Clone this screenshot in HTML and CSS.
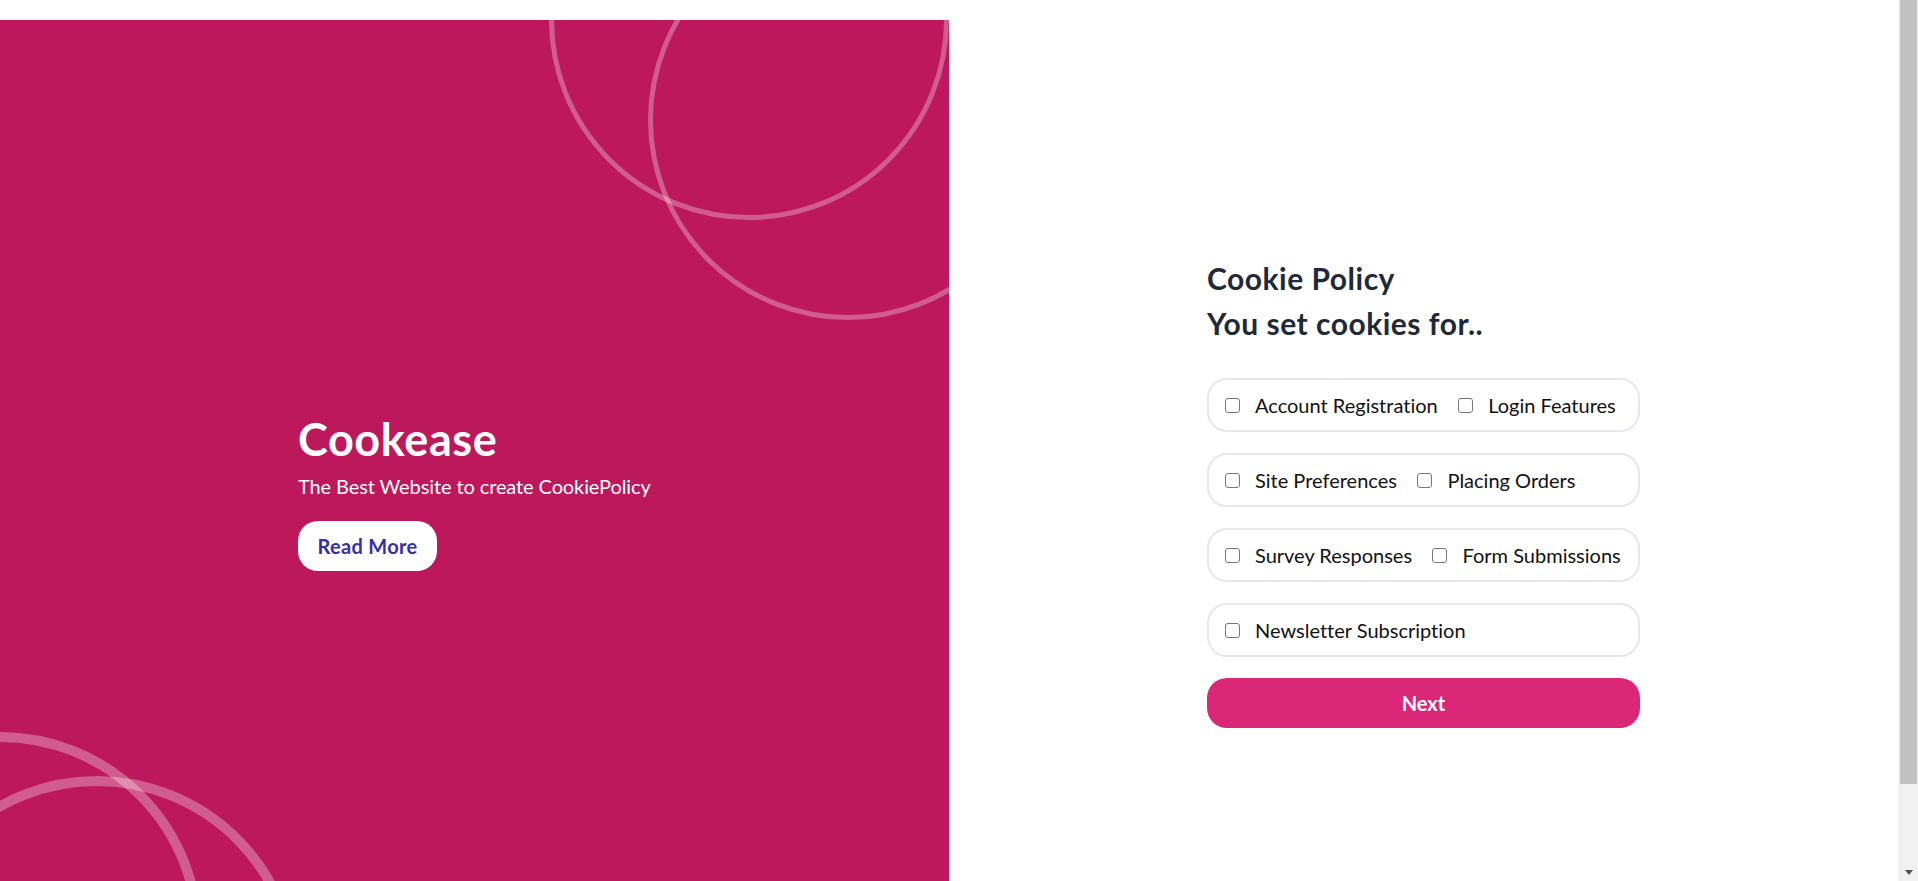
FILE: index.html
```html
<!DOCTYPE html>
<html lang="en">
<head>
<meta charset="utf-8">
<title>Cookease</title>
<link rel="stylesheet" href="styles.css">
</head>
<body>
<main class="page">
  <section class="hero">
    <span class="ring ring-a"></span>
    <span class="ring ring-b"></span>
    <span class="ring ring-c"></span>
    <span class="ring ring-d"></span>
    <div class="hero-content">
      <h1 class="brand">Cookease</h1>
      <p class="tagline">The Best Website to create CookiePolicy</p>
      <a class="read-more" href="#">Read More</a>
    </div>
  </section>
  <section class="panel">
    <form class="policy-form">
      <h2 class="title">Cookie Policy</h2>
      <h2 class="title">You set cookies for..</h2>
      <div class="options">
        <div class="option-row">
          <label class="option"><input type="checkbox"><span>Account Registration</span></label>
          <label class="option"><input type="checkbox"><span>Login Features</span></label>
        </div>
        <div class="option-row">
          <label class="option"><input type="checkbox"><span>Site Preferences</span></label>
          <label class="option"><input type="checkbox"><span>Placing Orders</span></label>
        </div>
        <div class="option-row">
          <label class="option"><input type="checkbox"><span>Survey Responses</span></label>
          <label class="option"><input type="checkbox"><span>Form Submissions</span></label>
        </div>
        <div class="option-row">
          <label class="option"><input type="checkbox"><span>Newsletter Subscription</span></label>
        </div>
      </div>
      <button type="button" class="next">Next</button>
    </form>
  </section>
</main>
<div class="scrollbar" aria-hidden="true">
  <div class="scroll-thumb"></div>
  <div class="scroll-arrow"></div>
</div>
</body>
</html>
```
FILE: styles.css
```css
html, body {
  margin: 0;
  padding: 0;
  background: #ffffff;
}

body {
  font-family: Lato, "Open Sans", "Liberation Sans", sans-serif;
  font-variant-ligatures: none;
}

.page {
  display: flex;
  margin-top: 20px;
}

/* left hero */
.hero {
  position: relative;
  flex: none;
  width: 949px;
  height: 944px;
  background: #be185d;
  overflow: hidden;
  display: flex;
  align-items: center;
  justify-content: center;
}

.ring {
  position: absolute;
  box-sizing: border-box;
  border-radius: 50%;
  border: 5px solid rgba(255, 255, 255, 0.3);
}

.ring-a { width: 400px; height: 400px; left: 549px; top: -200px; }
.ring-b { width: 400px; height: 400px; left: 648px; top: -100px; }
.ring-c { width: 406px; height: 406px; left: -203px; top: 712px; border-width: 10px; }
.ring-d { width: 406px; height: 406px; left: -106px; top: 756px; border-width: 10px; }

.hero-content {
  position: relative;
  width: 350px;
  margin-left: -3px;
  color: #ffffff;
}

.brand {
  margin: 0;
  font-size: 45px;
  line-height: 50px;
  font-weight: 700;
  letter-spacing: 0.6px;
}

.tagline {
  margin: 7px 0 0;
  font-size: 20px;
  line-height: 30px;
  letter-spacing: -0.1px;
  white-space: nowrap;
}

.read-more {
  display: flex;
  align-items: center;
  justify-content: center;
  width: 139px;
  height: 50px;
  margin-top: 20px;
  border-radius: 20px;
  background: #ffffff;
  color: #3730a3;
  font-size: 20px;
  font-weight: 700;
  letter-spacing: 0.3px;
  text-decoration: none;
}

/* right form panel */
.panel {
  flex: none;
  width: 951px;
  height: 944px;
  display: flex;
  align-items: center;
  justify-content: center;
}

.policy-form {
  width: 433px;
  margin: 0 0 0 -2px;
}

.title {
  margin: 0;
  font-size: 30px;
  line-height: 45px;
  font-weight: 700;
  letter-spacing: 0.5px;
  color: #1f2937;
}

.options {
  margin-top: 32px;
}

.option-row {
  box-sizing: border-box;
  height: 54px;
  margin-bottom: 21px;
  padding: 0 0 0 15.5px;
  border: 2px solid #e5e7eb;
  border-radius: 20px;
  display: flex;
  align-items: center;
  gap: 20px;
}

.option {
  display: flex;
  align-items: center;
  font-size: 20px;
  line-height: 30px;
  color: #111111;
  white-space: nowrap;
}

.option input {
  appearance: none;
  -webkit-appearance: none;
  box-sizing: border-box;
  flex: none;
  width: 15px;
  height: 15px;
  margin: 0 15.5px 0 0;
  border: 1px solid #767676;
  border-radius: 3px;
  background: #ffffff;
}

.next {
  display: block;
  width: 100%;
  height: 50px;
  border: none;
  border-radius: 20px;
  background: #db2777;
  color: #ffffff;
  font-family: inherit;
  font-size: 20px;
  font-weight: 700;
  cursor: pointer;
}

/* browser scrollbar, drawn over the page's right edge */
.scrollbar {
  position: fixed;
  top: 0;
  right: 0;
  width: 20px;
  height: 100vh;
  background: #f1f1f1;
  display: flex;
  flex-direction: column;
  align-items: stretch;
}

.scroll-thumb {
  height: 784px;
  margin: 0 1px 0 2px;
  background: #c1c1c1;
}

.scroll-arrow {
  align-self: center;
  width: 0;
  height: 0;
  margin-top: 86px;
  margin-left: 1px;
  border-left: 4.5px solid transparent;
  border-right: 4.5px solid transparent;
  border-top: 5px solid #505050;
}
```
